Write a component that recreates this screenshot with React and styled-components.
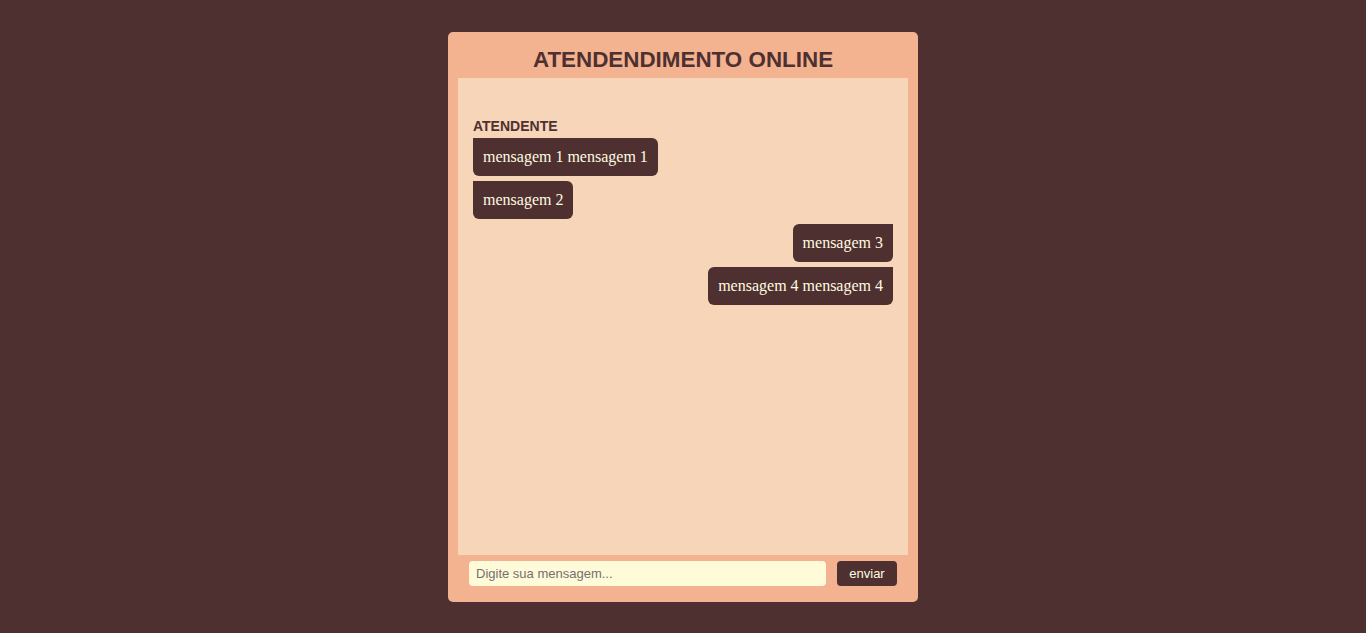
import React from 'react';
import styled, { createGlobalStyle } from 'styled-components';

const GlobalStyle = createGlobalStyle`
  body {
    margin: 0;
    background: #4e3030;
    font-family: "Liberation Sans", Arial, sans-serif;
  }
`

const Page = styled.div`
  display: flex;
  justify-content: center;
  padding-top: 32px;
  height: 633px;
  box-sizing: border-box;
`

const Card = styled.div`
  width: 470px;
  height: 570px;
  background: #f3b290;
  border-radius: 5px;
  display: flex;
  flex-direction: column;
  padding: 0 10px;
  box-sizing: border-box;
`

const Title = styled.h1`
  margin: 0;
  height: 46px;
  display: flex;
  align-items: center;
  justify-content: center;
  padding-top: 10px;
  box-sizing: border-box;
  font-size: 22.4px;
  font-weight: bold;
  color: #4e3030;
`

const ChatArea = styled.div`
  flex: 1;
  background: #f6d5b9;
  padding: 40px 15px 15px;
  display: flex;
  flex-direction: column;
  gap: 5px;
`

const Sender = styled.div`
  font-size: 14px;
  font-weight: bold;
  color: #4e3030;
  margin-bottom: -1px;
`

const Bubble = styled.div`
  align-self: ${p => (p.$mine ? 'flex-end' : 'flex-start')};
  background: #4e3030;
  color: #fffbe0;
  font-family: "Liberation Serif", "Times New Roman", serif;
  font-size: 16px;
  line-height: 18px;
  padding: 10px;
  border-radius: 6px;
  ${p => (p.$mine ? 'border-top-right-radius: 0;' : 'border-top-left-radius: 0;')}
`

const InputRow = styled.form`
  height: 47px;
  display: flex;
  align-items: flex-start;
  padding: 6px 11px 0;
  gap: 11px;
  box-sizing: border-box;
`

const Input = styled.input`
  flex: 1;
  height: 25px;
  box-sizing: border-box;
  border: none;
  border-radius: 4px;
  background: #fffad8;
  padding: 0 7px;
  font-family: "Liberation Sans", Arial, sans-serif;
  font-size: 13px;
  color: #4e3030;
  outline: none;
  &::placeholder {
    color: #757070;
  }
`

const SendButton = styled.button`
  width: 60px;
  height: 25px;
  border: none;
  border-radius: 4px;
  background: #4e3030;
  color: #fffbe0;
  font-family: "Liberation Sans", Arial, sans-serif;
  font-size: 13px;
  cursor: pointer;
`

const messages = [
  { text: 'mensagem 1 mensagem 1', mine: false },
  { text: 'mensagem 2', mine: false },
  { text: 'mensagem 3', mine: true },
  { text: 'mensagem 4 mensagem 4', mine: true },
];

function App() {
  return (
    <>
      <GlobalStyle />
      <Page>
        <Card>
          <Title>ATENDENDIMENTO ONLINE</Title>
          <ChatArea>
            <Sender>ATENDENTE</Sender>
            {messages.map((m, i) => (
              <Bubble key={i} $mine={m.mine}>{m.text}</Bubble>
            ))}
          </ChatArea>
          <InputRow onSubmit={e => e.preventDefault()}>
            <Input placeholder="Digite sua mensagem..." />
            <SendButton type="submit">enviar</SendButton>
          </InputRow>
        </Card>
      </Page>
    </>
  );
}

export default App;
